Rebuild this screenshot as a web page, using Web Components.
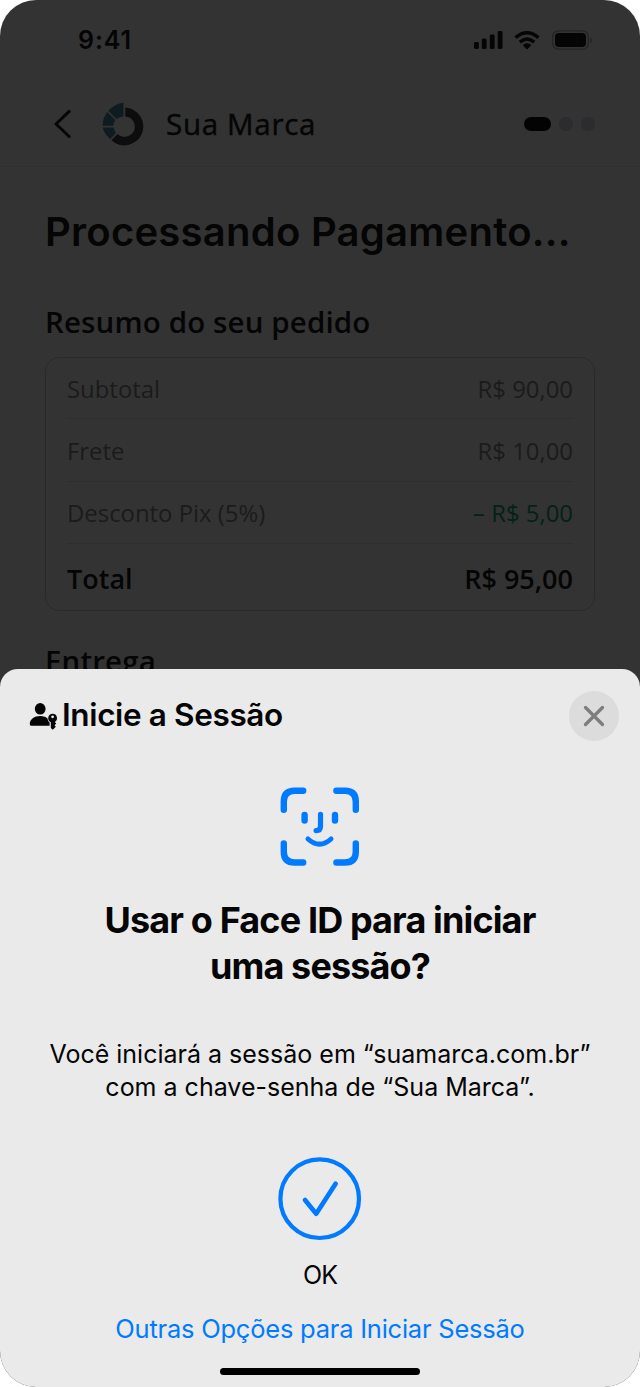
<!DOCTYPE html>
<html lang="pt-BR">
<head>
<meta charset="utf-8">
<title>Pagamento</title>
<style>
body{margin:0;background:#fff;width:640px;height:1387px;overflow:hidden}
</style>
</head>
<body>
<phone-screen>
  <status-bar></status-bar>
  <brand-header>Sua Marca</brand-header>
  <order-page></order-page>
  <passkey-sheet slot="sheet"></passkey-sheet>
</phone-screen>
<script>
const define = (name, html) => customElements.define(name, class extends HTMLElement {
  constructor() {
    super();
    this.attachShadow({ mode: 'open' }).innerHTML = html;
  }
});

define('phone-screen', `
<style>
:host{display:flex;flex-direction:column;position:relative;width:640px;height:1387px;border-radius:36px;overflow:hidden;background:#333;color:#050505;font-family:"Open Sans",sans-serif}
::slotted([slot=sheet]){position:absolute;left:0;right:0;bottom:0;height:718px}
</style>
<slot></slot><slot name="sheet"></slot>`);

define('status-bar', `
<style>
:host{display:flex;justify-content:space-between;align-items:center;height:80px;padding:0 48px 0 78px;box-sizing:border-box;font:600 25px/30px Inter,sans-serif}
svg{display:block}
span{letter-spacing:.9px}
</style>
<span>9:41</span>
<svg width="120" height="22" viewBox="472 29 120 22">
  <g fill="#050505">
    <rect x="474" y="42" width="4.8" height="7" rx="1.4"/><rect x="481.8" y="38.6" width="4.8" height="10.4" rx="1.4"/>
    <rect x="489.8" y="34.6" width="4.8" height="14.4" rx="1.4"/><rect x="497.7" y="31" width="4.8" height="18" rx="1.4"/>
    <path d="M527 49.2L523 45.2Q527 41.8 531 45.2Z" stroke="#050505" stroke-width=".6" stroke-linejoin="round"/>
    <rect x="555" y="33" width="31" height="14" rx="4"/>
  </g>
  <g fill="none" stroke="#050505" stroke-width="3.4">
    <path d="M515.6 37.6Q527 27.8 538.4 37.6"/><path d="M519.8 42.1Q527 35.8 534.2 42.1"/>
  </g>
  <rect x="552.6" y="30.8" width="35.8" height="18.4" rx="6" fill="none" stroke="#242424" stroke-width="1.3"/>
  <path d="M590.3 37.4Q592.3 38.3 592.3 40.3Q592.3 42.3 590.3 43.2Z" fill="#242424"/>
</svg>`);

define('brand-header', `
<style>
:host{display:flex;align-items:center;height:87px;padding:0 45px 0 52px;box-sizing:border-box;border-bottom:1px solid #303030;font-size:29.5px;font-weight:500;line-height:40px}
.back{margin-top:2px}.logo{margin-left:29px;margin-top:1px}
.name{margin-left:21px;margin-top:2px;flex:1;letter-spacing:.7px;-webkit-text-stroke:.45px #050505}
.steps{display:flex;gap:8.3px;margin-top:2px}
i{width:13.7px;height:13.7px;border-radius:7px;background:#2c2c2e}
i.on{width:27.3px;background:#030303}
</style>
<svg class="back" width="20" height="30" viewBox="52 109 20 30"><path d="M69.2 111.3L56 124L69.2 136.5" fill="none" stroke="#060606" stroke-width="3" stroke-linecap="round" stroke-linejoin="round"/></svg>
<svg class="logo" width="44" height="44" viewBox="101 102 44 44">
  <path d="M125.3 107.6A18.9 18.9 0 1 1 111.4 140.2L117.6 134A10.2 10.2 0 1 0 125.3 116.4Z" fill="#0d0d0d"/>
  <g fill="#0e1c21"><path d="M123.4 102.4V116.4Q119.5 116.8 116.6 119L108.2 110.7Q115 103.6 123.4 102.4Z"/><path d="M107.2 112L115.3 120Q113.4 122.5 113.3 125.8H102.6Q102.5 118.5 107.2 112Z"/><path d="M102.8 127.6H113.5Q114 130.7 115.9 132.9L110.2 138.9Q104 134 102.8 127.6Z"/></g>
</svg>
<span class="name"><slot></slot></span>
<div class="steps"><i class="on"></i><i></i><i></i></div>`);

define('order-page', `
<style>
:host{display:flex;flex-direction:column;padding:43px 45px 0}
h1{margin:0;font:600 40px/44px Inter,sans-serif;letter-spacing:.25px;white-space:nowrap}
h2{margin:0;font-size:29.5px;font-weight:600;line-height:40px;letter-spacing:.13px}
.sum{margin-top:48px}.del{margin-top:30px}
.card{display:flex;flex-direction:column;margin-top:15px;height:254px;box-sizing:border-box;border:1px solid #2a2a2a;border-radius:14px;padding:0 21px}
</style>
<h1>Processando Pagamento...</h1>
<h2 class="sum">Resumo do seu pedido</h2>
<div class="card">
  <price-row style="--height:61.3px">Subtotal<span slot="value">R$ 90,00</span></price-row>
  <price-row>Frete<span slot="value">R$ 10,00</span></price-row>
  <price-row style="--value:#032216">Desconto Pix (5%)<span slot="value">– R$ 5,00</span></price-row>
  <price-row style="--height:68.5px;--ink:#050505;--value:#050505;--weight:600;--size:27px;--line:transparent">Total<span slot="value">R$ 95,00</span></price-row>
</div>
<h2 class="del">Entrega</h2>`);

define('price-row', `
<style>
:host{display:flex;flex:none;justify-content:space-between;align-items:center;height:var(--height,62.3px);padding-top:2px;box-sizing:border-box;border-bottom:1px solid var(--line,#2e2e2e);color:var(--ink,#1b1b1b);font-size:var(--size,23.9px);font-weight:var(--weight,400);line-height:34px}
::slotted([slot=value]){color:var(--value,#1b1b1b)}
</style>
<span><slot></slot></span><slot name="value"></slot>`);

define('passkey-sheet', `
<style>
:host{display:flex;flex-direction:column;align-items:center;box-sizing:border-box;border-radius:18px 18px 0 0;background:#eaeaea;color:#050505;font-family:Inter,sans-serif}
header{display:flex;align-items:center;align-self:stretch;height:94px;padding:0 21px 0 29px}
header svg{display:block}
h2{margin:0 0 2px 4px;flex:1;font-size:31.5px;font-weight:600;line-height:40px;letter-spacing:-.37px}
button{all:unset;display:grid;place-items:center;width:50px;height:50px;border-radius:50%;background:#dcdcdc}
.face{margin-top:24px;display:block}
h3{margin:30px 0 0;font-size:36px;font-weight:700;line-height:46px;letter-spacing:-.87px;text-align:center;white-space:nowrap}
p{margin:49px 0 0;font-size:25px;line-height:33px;text-align:center;letter-spacing:0;white-space:nowrap}
.ok{display:block;margin-top:53px}
.oklabel{margin-top:17px;font-size:25px;line-height:34px;letter-spacing:-.9px}
a{margin-top:20px;font-size:25.5px;line-height:34px;letter-spacing:-.23px;color:#007aff;white-space:nowrap}
.home{margin-top:21.5px;width:200px;height:7.5px;border-radius:4px;background:#000}
</style>
<header>
  <svg width="29" height="30" viewBox="29 701 29 30" fill="#050505">
    <ellipse cx="40.2" cy="708.8" rx="5.4" ry="5.8"/>
    <path d="M29.8 724.2C29.8 719.3 34.3 716.1 40.2 716.1C43.6 716.1 46.2 717 47.6 718.6C47.6 720.3 48.4 721.6 49.6 722.6V725.8H31.4Q29.8 725.8 29.8 724.2Z"/>
    <path fill-rule="evenodd" d="M52.6 713.8A4.4 4.4 0 0 1 54.8 722L56.2 723.6L54.6 725.2L55.8 726.8L52.8 729.8L50.8 728V722.2A4.4 4.4 0 0 1 52.6 713.8ZM52.6 715.4A1.4 1.4 0 1 0 52.6 718.2A1.4 1.4 0 1 0 52.6 715.4Z"/>
  </svg>
  <h2>Inicie a Sessão</h2>
  <button aria-label="Fechar"><svg width="24" height="24" viewBox="0 0 24 24"><path d="M3.5 3.5L20.5 20.5M20.5 3.5L3.5 20.5" stroke="#7d7d7f" stroke-width="3.3" stroke-linecap="round"/></svg></button>
</header>
<svg class="face" width="80" height="80" viewBox="280 787 80 80" fill="none" stroke="#007aff" stroke-width="6.4" stroke-linecap="round">
  <path d="M283.8 809.8V801.5Q283.8 790.7 294.6 790.7H303.2M336.4 790.7H345Q355.8 790.7 355.8 801.5V809.8M355.8 843.5V851.7Q355.8 862.5 345 862.5H336.4M303.2 862.5H294.6Q283.8 862.5 283.8 851.7V843.5"/>
  <path d="M304.6 815V820.6M335 815V820.6"/>
  <path d="M320.5 814.4V826.2Q320.5 830.6 316.1 830.6" stroke-width="5.2"/>
  <path d="M308 839Q319.5 849.4 331 839" stroke-width="5"/>
</svg>
<h3>Usar o Face ID para iniciar<br>uma sessão?</h3>
<p>Você iniciará a sessão em “suamarca.com.br”<br>com a chave-senha de “Sua Marca”.</p>
<svg class="ok" width="84" height="84" viewBox="278 1157 84 84" fill="none" stroke="#007aff"><circle cx="319.7" cy="1198.7" r="39.3" stroke-width="4.2"/><path d="M305 1200L316.2 1213.8L335.6 1183.8" stroke-width="4.7" stroke-linecap="round" stroke-linejoin="round"/></svg>
<span class="oklabel">OK</span>
<a>Outras Opções para Iniciar Sessão</a>
<div class="home"></div>`);
</script>
</body>
</html>
